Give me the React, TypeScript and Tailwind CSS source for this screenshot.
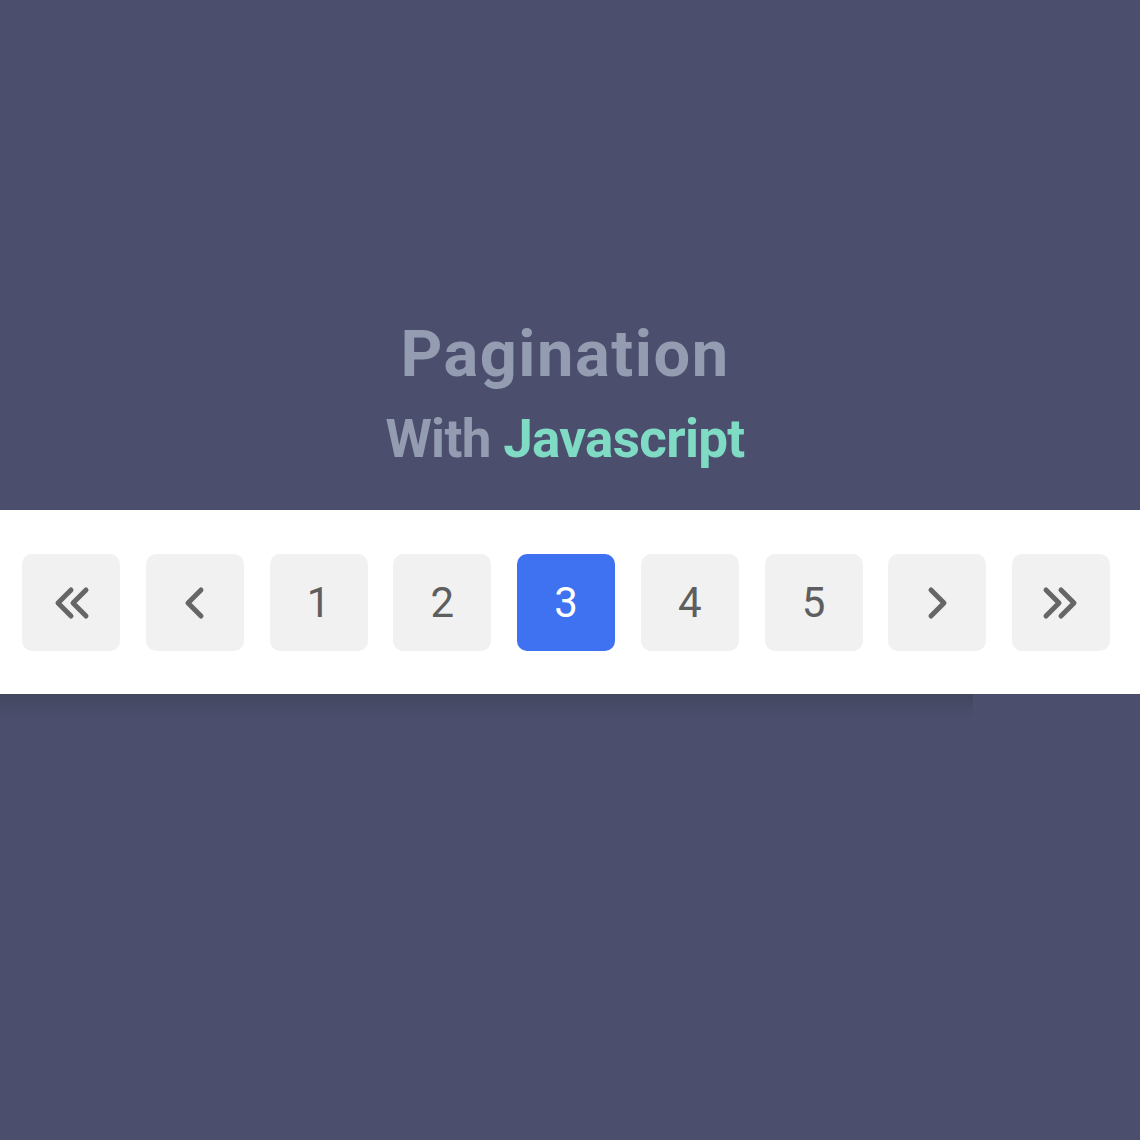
import React from "react";

const Chevron = ({ dir, double }: { dir: "left" | "right"; double?: boolean }) => {
  const w = double ? 42 : 28;
  const flip = dir === "right" ? `translate(${w},0) scale(-1,1)` : undefined;
  return (
    <svg width={w} height={36} viewBox={`0 0 ${w} 36`} fill="none">
      <g transform={flip} stroke="#666666" strokeWidth={5} strokeLinecap="round" strokeLinejoin="round">
        {double ? (
          <>
            <polyline points="21,5 8,18 21,31" />
            <polyline points="36,5 23,18 36,31" />
          </>
        ) : (
          <polyline points="20,5 7,18 20,31" />
        )}
      </g>
    </svg>
  );
};

const Btn = ({ children, active }: { children: React.ReactNode; active?: boolean }) => (
  <div
    className={
      active
        ? "w-[98px] h-[97px] rounded-[10px] bg-[#3f72f0] text-white flex items-center justify-center text-[42px] leading-none font-normal"
        : "w-[98px] h-[97px] rounded-[10px] bg-[#f1f1f1] text-[#5e5e5e] flex items-center justify-center text-[42px] leading-none font-normal"
    }
  >
    {children}
  </div>
);

export default function App() {
  return (
    <div
      className="w-[1140px] h-[1140px] bg-[#4b4f6d] flex flex-col"
      style={{ fontFamily: "Roboto, 'Noto Sans', sans-serif" }}
    >
      <div className="h-[510px] flex flex-col items-center pt-[322px] pr-[10px]">
        <div className="text-[65px] leading-none font-bold tracking-[1.5px] text-[#949cb1]">Pagination</div>
        <div className="mt-[26px] text-[53px] leading-none font-bold tracking-[-0.7px] text-[#949cb1]">
          With <span className="text-[#7fdbc4]">Javascript</span>
        </div>
      </div>
      <div className="h-[184px] bg-white flex items-center gap-[25.75px] pl-[22px] pt-px">
        <Btn>
          <Chevron dir="left" double />
        </Btn>
        <Btn>
          <Chevron dir="left" />
        </Btn>
        <Btn>1</Btn>
        <Btn>2</Btn>
        <Btn active>3</Btn>
        <Btn>4</Btn>
        <Btn>5</Btn>
        <Btn>
          <Chevron dir="right" />
        </Btn>
        <Btn>
          <Chevron dir="right" double />
        </Btn>
      </div>
      <div className="w-[973px] h-[24px] bg-gradient-to-b from-[#43465f] to-[#4b4f6d]" />
    </div>
  );
}
